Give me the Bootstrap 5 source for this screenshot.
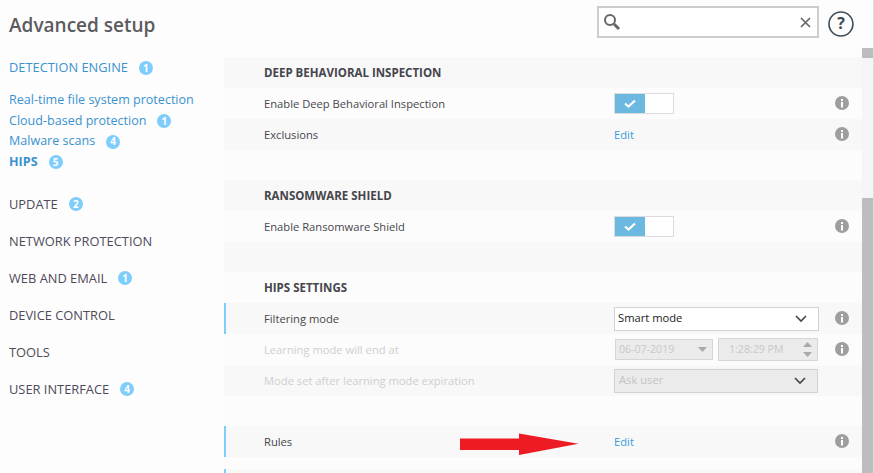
<!DOCTYPE html>
<html lang="en">
<head>
<meta charset="utf-8">
<title>Advanced setup</title>
<link rel="stylesheet" href="https://cdn.jsdelivr.net/npm/bootstrap@5.3.0/dist/css/bootstrap.min.css">
<style>
html,body{height:473px;overflow:hidden;}
body{background:#fdfdfd;font-family:"Open Sans","Noto Sans","Liberation Sans",sans-serif;font-size:11.2px;color:#4a4a4f;position:relative;}
.shell{height:473px;overflow:hidden;border-right:1px solid #dcdcdc;}
.side{width:224px;padding-left:9px;flex:none;}
.ttl{font-size:19px;font-weight:600;color:#5b5b5f;line-height:28px;margin:11px 0 19px;}
.nav-head{height:37px;font-size:12.85px;color:#4e4a57;}
.nav-head.on{color:#3a92cf;height:20px;margin-bottom:12px;}
.nav-sub{height:20.7px;color:#3a92cf;font-size:12.55px;}
.nav-sub.cur{font-weight:700;}
.subs{margin-bottom:13px;}
.cnt{width:14px;height:14px;border-radius:50%;background:#7fcdfb;color:#fff;font-size:10px;font-weight:700;margin-left:11px;}
.main{width:638px;flex:none;height:473px;overflow:hidden;}
.top{height:57px;padding:6px 8px 0 373px;}
.srch{width:223px;height:32px;border:2px solid #cdcdcd;background:#fff;padding:0 6px 0 4px;}
.hlp{margin-left:9px;margin-top:5px;}
.rw{height:31px;background:#fcfcfc;padding-left:40px;font-size:11.2px;color:#47474c;position:relative;}
.rw.alt{background:#f8f8f8;}
.rw.cap{font-weight:700;font-size:11.5px;color:#45454c;}
.rw.dim{color:#cfcfcf;}
.rw.mark{border-left:2px solid #7fcdfb;padding-left:38px;}
.rw.gapr{height:30px;}
.rw.thin{height:12px;}
.rw.end{height:4px;}
.lbl{width:350px;flex:none;padding-top:1px;}
.ctl{width:205px;flex:none;}
.inf{margin-left:16px;margin-bottom:1px;}
.edit{color:#3a9ad9;text-decoration:none;display:inline-block;padding-top:1px;}
.tgl{width:60px;height:21px;border:1px solid #dcdcdc;background:#fff;}
.tgl-on{width:30px;background:#6bb8e0;}
.pick{height:24px;width:205px;border:1px solid #d2d2d2;background:#fff;padding:0 11px 0 3px;color:#222;font-size:11.2px;}
.pick.off{background:#ebebeb;width:204px;color:#c4c4c4;height:24px;padding-left:4px;}
.mini{height:21px;border:1px solid #d6d6d6;background:#ebebeb;color:#c8c8c8;padding:0 5px 0 3px;font-size:10.6px;}
.mini.d{width:98px;margin-left:1px;}
.mini.t{width:100px;margin-left:5px;height:23px;padding-left:10px;}
.bar{width:11px;flex:none;padding-top:48px;}
.bar-in{height:425px;background:#f5f5f5;}
.th1{height:10px;background:#bdbdbd;}
.th2{height:275px;background:#bdbdbd;margin-top:140px;}
.arrow{position:absolute;left:460px;top:433px;}
</style>
</head>
<body>
<div class="shell d-flex">
  <div class="side">
    <div class="ttl">Advanced setup</div>
    <div class="nav-head on d-flex align-items-center">DETECTION ENGINE<span class="cnt d-flex align-items-center justify-content-center">1</span></div>
    <div class="subs">
      <div class="nav-sub d-flex align-items-center">Real-time file system protection</div>
      <div class="nav-sub d-flex align-items-center">Cloud-based protection<span class="cnt d-flex align-items-center justify-content-center">1</span></div>
      <div class="nav-sub d-flex align-items-center">Malware scans<span class="cnt d-flex align-items-center justify-content-center">4</span></div>
      <div class="nav-sub cur d-flex align-items-center">HIPS<span class="cnt d-flex align-items-center justify-content-center">5</span></div>
    </div>
    <div class="nav-head d-flex align-items-center">UPDATE<span class="cnt d-flex align-items-center justify-content-center">2</span></div>
    <div class="nav-head d-flex align-items-center">NETWORK PROTECTION</div>
    <div class="nav-head d-flex align-items-center">WEB AND EMAIL<span class="cnt d-flex align-items-center justify-content-center">1</span></div>
    <div class="nav-head d-flex align-items-center">DEVICE CONTROL</div>
    <div class="nav-head d-flex align-items-center">TOOLS</div>
    <div class="nav-head d-flex align-items-center">USER INTERFACE<span class="cnt d-flex align-items-center justify-content-center">4</span></div>
  </div>
  <div class="main">
    <div class="top d-flex align-items-start">
      <div class="srch d-flex align-items-center justify-content-between">
        <svg width="18" height="18" viewBox="0 0 18 18"><circle cx="7" cy="7" r="5" fill="none" stroke="#666" stroke-width="2"/><path d="M11 11l5 5" stroke="#666" stroke-width="3"/></svg>
        <svg width="11" height="11" viewBox="0 0 11 11"><path d="M1 1l9 9M10 1l-9 9" stroke="#666" stroke-width="1.7"/></svg>
      </div>
      <svg class="hlp" width="26" height="26" viewBox="0 0 26 26"><circle cx="13" cy="13" r="12" fill="none" stroke="#3d4a55" stroke-width="1.6"/><text x="13" y="18.500" text-anchor="middle" font-size="16" font-weight="700" fill="#3d4a55" font-family="Open Sans, sans-serif">?</text></svg>
    </div>
    <div class="rw alt cap d-flex align-items-center">DEEP BEHAVIORAL INSPECTION</div>
    <div class="rw d-flex align-items-center"><div class="lbl">Enable Deep Behavioral Inspection</div><div class="ctl"><div class="tgl d-flex"><div class="tgl-on d-flex align-items-center justify-content-center"><svg width="12" height="9" viewBox="0 0 12 9"><path d="M1 4.500l3.500 3L11 1.500" fill="none" stroke="#fff" stroke-width="2.2"/></svg></div></div></div><svg class="inf" width="14" height="14" viewBox="0 0 14 14"><circle cx="7" cy="7" r="7" fill="#9e9e9e"/><rect x="6" y="6" width="2" height="5.500" fill="#fff"/><rect x="6" y="3" width="2" height="2" fill="#fff"/></svg></div>
    <div class="rw alt d-flex align-items-center"><div class="lbl">Exclusions</div><div class="ctl"><a class="edit" href="#">Edit</a></div><svg class="inf" width="14" height="14" viewBox="0 0 14 14"><circle cx="7" cy="7" r="7" fill="#9e9e9e"/><rect x="6" y="6" width="2" height="5.500" fill="#fff"/><rect x="6" y="3" width="2" height="2" fill="#fff"/></svg></div>
    <div class="rw gapr"></div>
    <div class="rw alt cap d-flex align-items-center">RANSOMWARE SHIELD</div>
    <div class="rw d-flex align-items-center"><div class="lbl">Enable Ransomware Shield</div><div class="ctl"><div class="tgl d-flex"><div class="tgl-on d-flex align-items-center justify-content-center"><svg width="12" height="9" viewBox="0 0 12 9"><path d="M1 4.500l3.500 3L11 1.500" fill="none" stroke="#fff" stroke-width="2.2"/></svg></div></div></div><svg class="inf" width="14" height="14" viewBox="0 0 14 14"><circle cx="7" cy="7" r="7" fill="#9e9e9e"/><rect x="6" y="6" width="2" height="5.500" fill="#fff"/><rect x="6" y="3" width="2" height="2" fill="#fff"/></svg></div>
    <div class="rw alt gapr"></div>
    <div class="rw cap d-flex align-items-center">HIPS SETTINGS</div>
    <div class="rw alt mark d-flex align-items-center"><div class="lbl">Filtering mode</div><div class="ctl"><div class="pick d-flex align-items-center justify-content-between">Smart mode<svg width="12" height="8" viewBox="0 0 12 8"><path d="M1 1l5 5 5-5" fill="none" stroke="#444" stroke-width="1.6"/></svg></div></div><svg class="inf" width="14" height="14" viewBox="0 0 14 14"><circle cx="7" cy="7" r="7" fill="#9e9e9e"/><rect x="6" y="6" width="2" height="5.500" fill="#fff"/><rect x="6" y="3" width="2" height="2" fill="#fff"/></svg></div>
    <div class="rw dim d-flex align-items-center"><div class="lbl">Learning mode will end at</div><div class="ctl d-flex align-items-center"><div class="mini d d-flex align-items-center justify-content-between">06-07-2019<svg width="9" height="5" viewBox="0 0 9 5"><path d="M0 0h9L4.500 5z" fill="#aaa"/></svg></div><div class="mini t d-flex align-items-center justify-content-between">1:28:29 PM<svg width="9" height="15" viewBox="0 0 9 15"><path d="M0 5L4.500 0 9 5zM0 10h9L4.500 15z" fill="#aaa"/></svg></div></div><svg class="inf" width="14" height="14" viewBox="0 0 14 14"><circle cx="7" cy="7" r="7" fill="#9e9e9e"/><rect x="6" y="6" width="2" height="5.500" fill="#fff"/><rect x="6" y="3" width="2" height="2" fill="#fff"/></svg></div>
    <div class="rw alt dim d-flex align-items-center"><div class="lbl">Mode set after learning mode expiration</div><div class="ctl"><div class="pick off d-flex align-items-center justify-content-between">Ask user<svg width="12" height="8" viewBox="0 0 12 8"><path d="M1 1l5 5 5-5" fill="none" stroke="#444" stroke-width="1.6"/></svg></div></div></div>
    <div class="rw gapr"></div>
    <div class="rw alt mark d-flex align-items-center"><div class="lbl">Rules</div><div class="ctl"><a class="edit" href="#">Edit</a></div><svg class="inf" width="14" height="14" viewBox="0 0 14 14"><circle cx="7" cy="7" r="7" fill="#9e9e9e"/><rect x="6" y="6" width="2" height="5.500" fill="#fff"/><rect x="6" y="3" width="2" height="2" fill="#fff"/></svg></div>
    <div class="rw thin"></div>
    <div class="rw alt mark end"></div>
  </div>
  <div class="bar"><div class="bar-in"><div class="th1"></div><div class="th2"></div></div></div>
</div>
<svg class="arrow" width="119" height="22" viewBox="0 0 119 22"><path d="M0 5.500H59V0.500L118.500 10.800 59 22V17H0z" fill="#ed1c24"/></svg>
<script src="https://cdn.jsdelivr.net/npm/bootstrap@5.3.0/dist/js/bootstrap.bundle.min.js"></script>
</body>
</html>
